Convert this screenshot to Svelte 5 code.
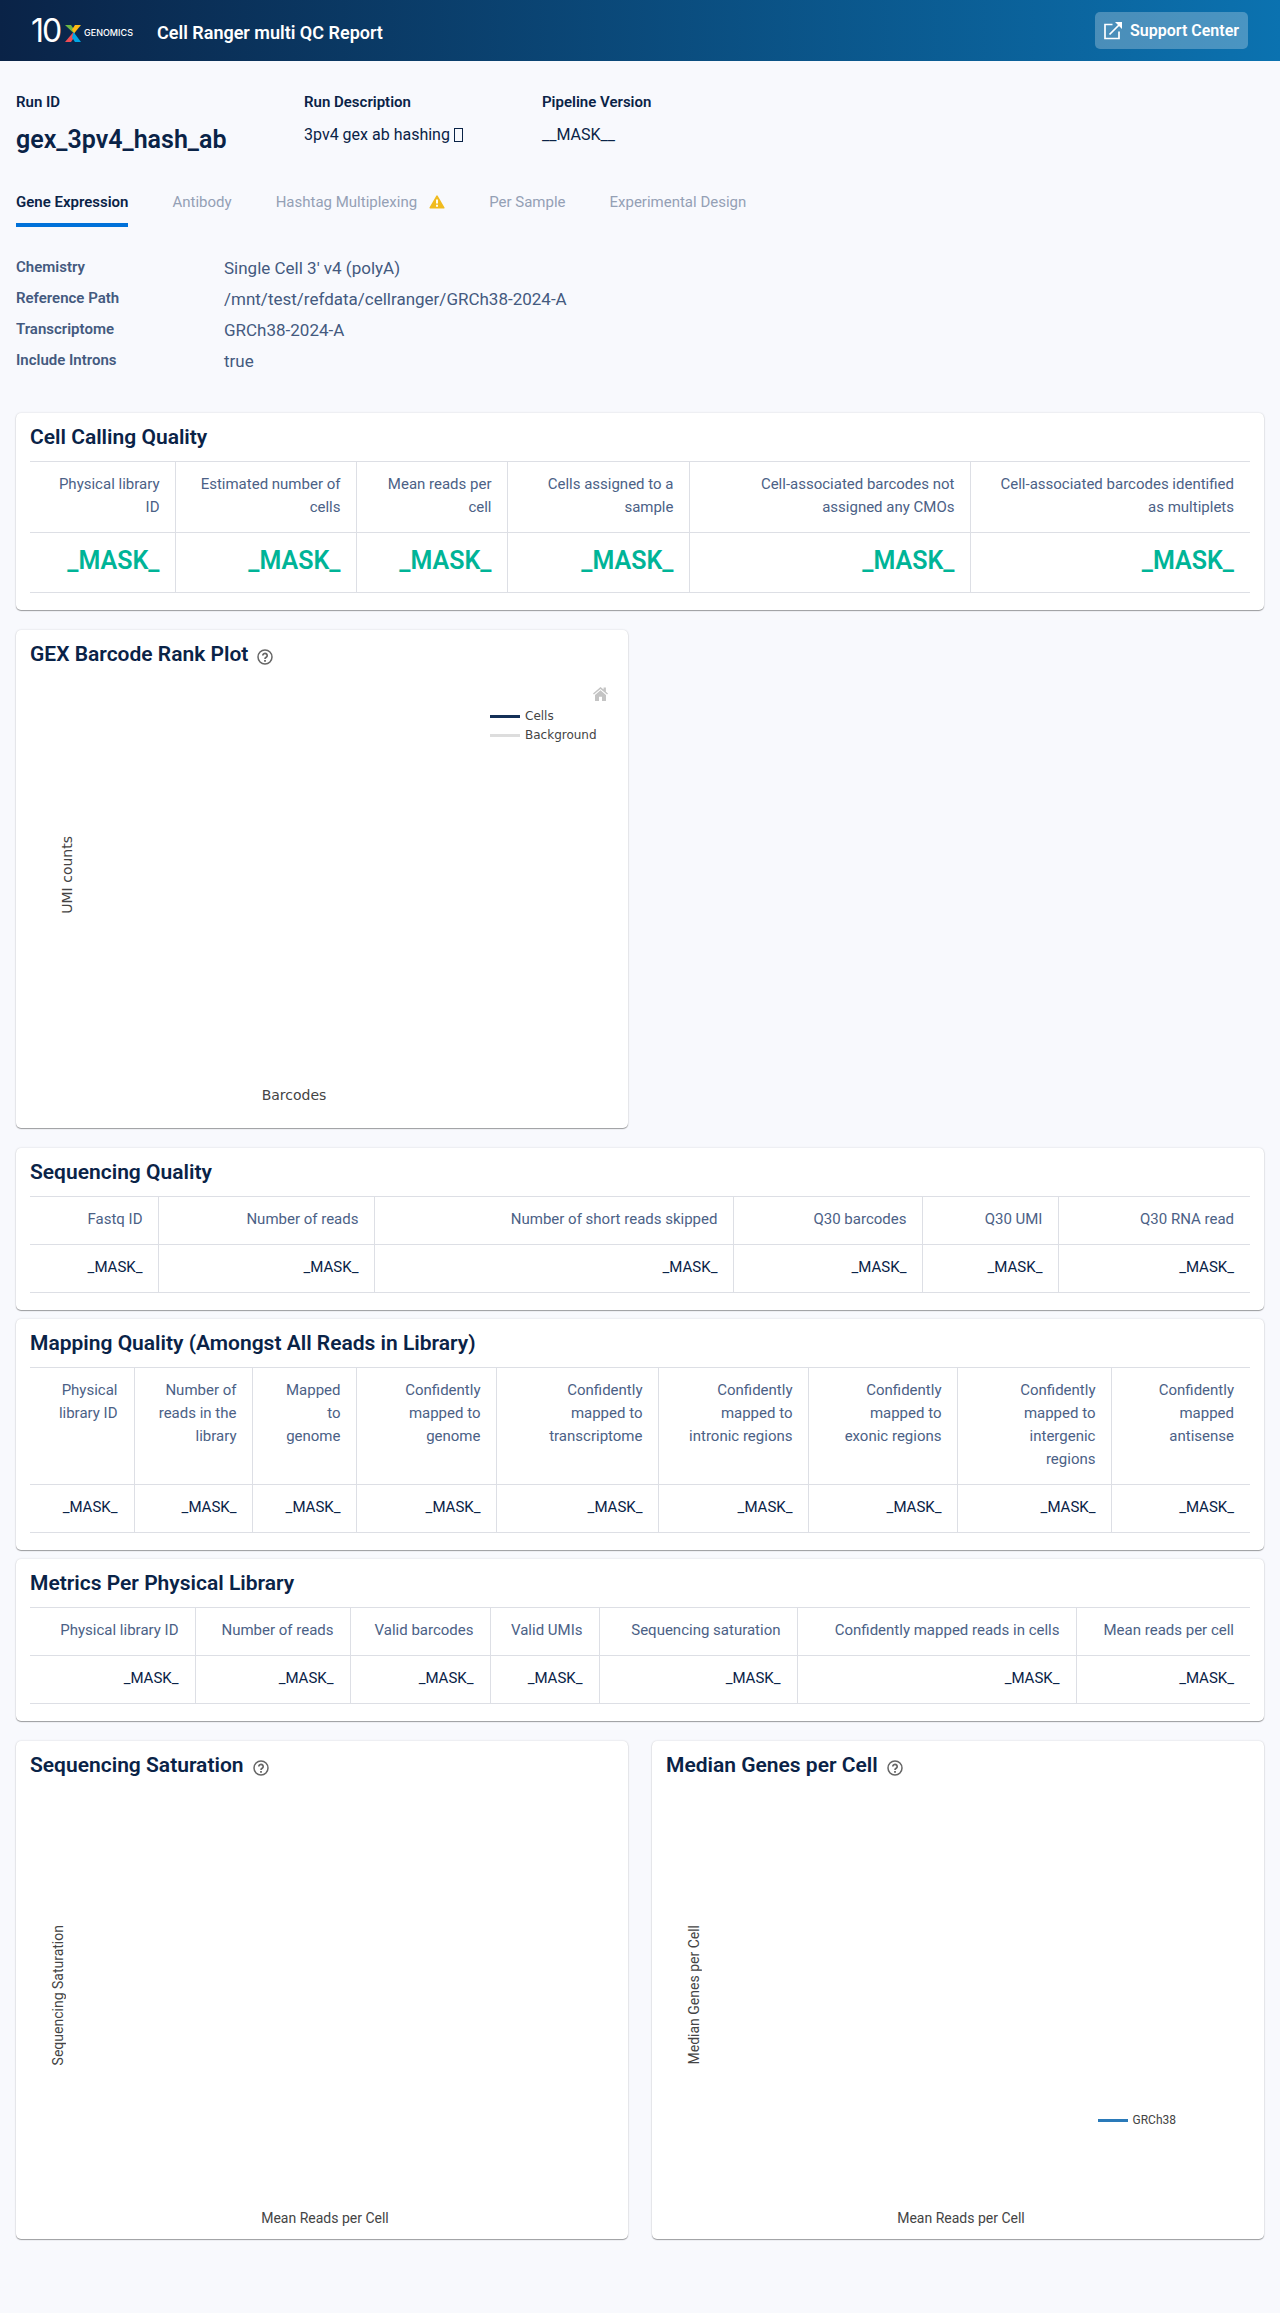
<script>
  const mask = '_MASK_';

  const tabs = [
    { label: 'Gene Expression', active: true },
    { label: 'Antibody' },
    { label: 'Hashtag Multiplexing', warning: true },
    { label: 'Per Sample' },
    { label: 'Experimental Design' }
  ];

  const details = [
    ['Chemistry', "Single Cell 3' v4 (polyA)"],
    ['Reference Path', '/mnt/test/refdata/cellranger/GRCh38-2024-A'],
    ['Transcriptome', 'GRCh38-2024-A'],
    ['Include Introns', 'true']
  ];

  // Each column is [heading, relative width].
  const cellCalling = {
    title: 'Cell Calling Quality',
    hero: true,
    columns: [
      ['Physical library\nID', 146],
      ['Estimated number of\ncells', 181],
      ['Mean reads per\ncell', 151],
      ['Cells assigned to a\nsample', 182],
      ['Cell-associated barcodes not\nassigned any CMOs', 281],
      ['Cell-associated barcodes identified\nas multiplets', 279]
    ]
  };

  const metricTables = [
    {
      title: 'Sequencing Quality',
      columns: [
        ['Fastq ID', 129],
        ['Number of reads', 216],
        ['Number of short reads skipped', 359],
        ['Q30 barcodes', 189],
        ['Q30 UMI', 136],
        ['Q30 RNA read', 191]
      ]
    },
    {
      title: 'Mapping Quality (Amongst All Reads in Library)',
      columns: [
        ['Physical\nlibrary ID', 104],
        ['Number of\nreads in the\nlibrary', 119],
        ['Mapped\nto\ngenome', 104],
        ['Confidently\nmapped to\ngenome', 140],
        ['Confidently\nmapped to\ntranscriptome', 162],
        ['Confidently\nmapped to\nintronic regions', 150],
        ['Confidently\nmapped to\nexonic regions', 149],
        ['Confidently\nmapped to\nintergenic\nregions', 154],
        ['Confidently\nmapped\nantisense', 138]
      ]
    },
    {
      title: 'Metrics Per Physical Library',
      columns: [
        ['Physical library ID', 165],
        ['Number of reads', 155],
        ['Valid barcodes', 140],
        ['Valid UMIs', 109],
        ['Sequencing saturation', 198],
        ['Confidently mapped reads in cells', 279],
        ['Mean reads per cell', 174]
      ]
    }
  ];

  const share = (columns, width) =>
    (100 * width) / columns.reduce((sum, column) => sum + column[1], 0);
</script>

{#snippet metricCard(data)}
  <section class="card">
    <h2>{data.title}</h2>
    <div class="scroll">
      <table class:hero={data.hero}>
        <colgroup>
          {#each data.columns as [, width]}
            <col style:width="{share(data.columns, width)}%" />
          {/each}
        </colgroup>
        <thead>
          <tr>
            {#each data.columns as [label]}<th scope="col">{label}</th>{/each}
          </tr>
        </thead>
        <tbody>
          <tr>
            {#each data.columns as _}<td>{mask}</td>{/each}
          </tr>
        </tbody>
      </table>
    </div>
  </section>
{/snippet}

{#snippet plotTitle(title)}
  <div class="plot-title">
    <h2>{title}</h2>
    <button class="help" type="button" aria-label="About {title}">
      <svg viewBox="0 0 16 16" width="16" height="16" fill="none" stroke="#666" aria-hidden="true">
        <circle cx="8" cy="8" r="7" stroke-width="1.5" />
        <path d="M5.8 6.5a2.2 2.1 0 1 1 3.5 1.7C8.4 8.8 8 9 8 9.9" stroke-width="1.7" />
        <path d="M8 11v1.7" stroke-width="1.8" />
      </svg>
    </button>
  </div>
{/snippet}

<header class="topbar">
  <svg class="logo" viewBox="-2 0 106 40" width="106" height="40" role="img" aria-label="10x Genomics">
    <text x="-1" y="31" class="logo-ten">1</text>
    <text x="10" y="31" class="logo-ten">0</text>
    <path d="M33 14h6l3.500 5v4z" fill="#6cb644" />
    <path d="M49 14h-6l-3 4.500 2 4z" fill="#fdb913" />
    <path d="M33 31h6l3.500-5-1-5z" fill="#ef4c54" />
    <path d="M49 31h-6l-3-4.500 1.500-5.500z" fill="#00a5e3" />
    <text x="52" y="25" class="logo-name">GENOMICS</text>
  </svg>
  <h1>Cell Ranger multi QC Report</h1>
  <a class="support" href="#support">
    <svg viewBox="0 0 18 18" width="18" height="18" fill="none" stroke="#fff" stroke-width="1.7" aria-hidden="true">
      <path d="M8.500 2.500H1v14h14V9.500M5.500 12.500L16 2" />
      <path d="M11 0h7v7z" fill="#fff" stroke="none" />
    </svg>
    Support Center
  </a>
</header>

<main>
  <dl class="run">
    <div class="run-id">
      <dt>Run ID</dt>
      <dd>gex_3pv4_hash_ab</dd>
    </div>
    <div>
      <dt>Run Description</dt>
      <dd>3pv4 gex ab hashing <span class="glyph"></span></dd>
    </div>
    <div>
      <dt>Pipeline Version</dt>
      <dd>__MASK__</dd>
    </div>
  </dl>

  <nav>
    {#each tabs as tab}
      <button type="button" class:active={tab.active}>
        {tab.label}
        {#if tab.warning}
          <svg viewBox="0 0 16 14" width="16" height="14" aria-hidden="true">
            <path d="M8 1.200L14.800 12.800H1.200z" fill="#f0bb1f" stroke="#f0bb1f" stroke-width="1.6" stroke-linejoin="round" />
            <path d="M8 4.500v4M8 9.800v1.900" stroke="#fff" stroke-width="1.9" />
          </svg>
        {/if}
      </button>
    {/each}
  </nav>

  <dl class="details">
    {#each details as [name, value]}
      <dt>{name}</dt>
      <dd>{value}</dd>
    {/each}
  </dl>

  {@render metricCard(cellCalling)}

  <div class="plots">
    <section class="card">
      {@render plotTitle('GEX Barcode Rank Plot')}
      <div class="plot rank">
        <span class="y-label">UMI counts</span>
        <div class="side">
          <button class="home" type="button" aria-label="Reset axes">
            <svg viewBox="0 0 15 14" width="15" height="14" fill="#c4c4c4" aria-hidden="true">
              <path d="M7.500 3.200L2 7.900V13.400q0 .6.600.6H6V9.800h3V14h3.400q.6 0 .6-.6V7.900z" />
              <path d="M7.500 0L0 6.500l.9 1.100L7.500 2l6.600 5.600.9-1.100-2.100-1.800V.6H10.600v2z" />
            </svg>
          </button>
          <ul class="legend">
            <li><i class="line cells"></i>Cells</li>
            <li><i class="line background"></i>Background</li>
          </ul>
        </div>
        <span class="x-label">Barcodes</span>
      </div>
    </section>
  </div>

  <div class="stack">
    {#each metricTables as data}
      {@render metricCard(data)}
    {/each}
  </div>

  <div class="plots">
    <section class="card">
      {@render plotTitle('Sequencing Saturation')}
      <div class="plot">
        <span class="y-label">Sequencing Saturation</span>
        <span class="x-label">Mean Reads per Cell</span>
      </div>
    </section>
    <section class="card">
      {@render plotTitle('Median Genes per Cell')}
      <div class="plot">
        <span class="y-label">Median Genes per Cell</span>
        <ul class="legend inner">
          <li><i class="line genome"></i>GRCh38</li>
        </ul>
        <span class="x-label">Mean Reads per Cell</span>
      </div>
    </section>
  </div>
</main>

<style>
  :global(body) {
    background: #f8f9fd;
    color: #0a2347;
    font: 15px/23px Roboto, 'Liberation Sans', sans-serif;
  }

  h1, h2, dl, dd, ul {
    margin: 0;
    padding: 0;
  }

  button {
    padding: 0;
    border: 0;
    background: none;
    font: inherit;
    cursor: pointer;
  }

  .topbar {
    display: flex;
    align-items: center;
    height: 61px;
    padding: 0 32px 0 30px;
    background: linear-gradient(90deg, #0a2347, #0b72b0);
    color: #fff;
  }

  .logo {
    flex: none;
    margin-right: 21px;
    fill: #fff;
    font-family: Inter, 'Liberation Sans', sans-serif;
  }

  .logo-ten {
    font-size: 32px;
    font-weight: 400;
  }

  .logo-name {
    font-size: 9px;
    font-weight: 500;
  }

  h1 {
    padding-top: 3px;
    font-size: 18px;
    font-weight: 600;
  }

  .support {
    display: flex;
    align-items: center;
    gap: 8px;
    height: 37px;
    margin-left: auto;
    padding: 0 9px;
    border-radius: 5px;
    background: rgba(255, 255, 255, 0.26);
    color: #fff;
    font-size: 16px;
    font-weight: 600;
    text-decoration: none;
  }

  main {
    padding: 30px 16px 53px;
  }

  .run {
    display: grid;
    grid-template-columns: 288px 238px 1fr;
  }

  .run dt {
    font-weight: 600;
  }

  .run dd {
    margin-top: 8px;
    font-size: 16px;
    line-height: 26px;
  }

  .run .run-id dd {
    font-size: 25px;
    font-weight: 600;
    line-height: 36px;
  }

  .glyph {
    display: inline-block;
    box-sizing: border-box;
    width: 9px;
    height: 14px;
    border: 1px solid #0a2347;
    vertical-align: -2px;
  }

  nav {
    display: flex;
    flex-wrap: wrap;
    gap: 0 44px;
    margin-top: 24px;
  }

  nav button {
    display: flex;
    align-items: center;
    gap: 12px;
    height: 45px;
    padding: 8px 0 9px;
    border-bottom: 4px solid transparent;
    color: #94a0b5;
  }

  nav .active {
    border-color: #0071d9;
    color: #0a2347;
    font-weight: 600;
  }

  .details {
    display: grid;
    grid-template-columns: 208px 1fr;
    margin-top: 25px;
    padding-bottom: 37px;
    color: #445a7f;
    line-height: 31px;
  }

  .details dt {
    font-weight: 600;
  }

  .details dd {
    padding-top: 2px;
    font-size: 17px;
    line-height: 29px;
  }

  .card {
    min-width: 0;
    padding: 0 14px;
    border-radius: 5px;
    background: #fff;
    box-shadow: 0 1px 1px rgba(0, 0, 0, 0.35), 0 0 2px rgba(0, 0, 0, 0.16);
  }

  h2 {
    font-size: 21px;
    font-weight: 600;
    line-height: 48px;
  }

  .scroll {
    overflow-x: auto;
    padding-bottom: 17px;
  }

  table {
    width: 100%;
    border-collapse: collapse;
    table-layout: fixed;
  }

  th, td {
    padding: 11px 16px 13px 4px;
    border: solid #dddfe5;
    border-width: 1px 0 1px 1px;
    text-align: right;
    vertical-align: top;
  }

  th:first-child, td:first-child {
    border-left: 0;
  }

  th {
    color: #4b6186;
    font-weight: 400;
    white-space: pre-line;
  }

  .hero td {
    padding-top: 10px;
    padding-bottom: 13px;
    color: #00b497;
    font-size: 25px;
    font-weight: 600;
    line-height: 36px;
  }

  .plots {
    display: grid;
    grid-template-columns: repeat(2, minmax(0, 1fr));
    gap: 24px;
    margin: 20px 0;
  }

  .stack {
    display: grid;
    gap: 9px;
  }

  .plot-title {
    display: flex;
    align-items: center;
    gap: 9px;
  }

  .help {
    height: 16px;
    margin-top: 6px;
    line-height: 0;
  }

  .plot {
    display: grid;
    grid-template: minmax(412px, 1fr) 34px / 84px minmax(0, 1fr) 78px;
    margin: 0 -14px;
    padding-bottom: 4px;
    color: #444;
    font-size: 14px;
  }

  .rank {
    grid-template: minmax(394px, 1fr) 46px / 82px minmax(0, 1fr) 138px;
    padding-bottom: 10px;
    font-family: 'DejaVu Sans', sans-serif;
  }

  .y-label {
    grid-area: 1 / 1;
    place-self: center;
    writing-mode: vertical-rl;
    transform: rotate(180deg);
  }

  .rank .y-label {
    margin-left: 20px;
  }

  .x-label {
    grid-area: 2 / 2;
    place-self: center;
  }

  .side {
    grid-area: 1 / 3;
    display: flex;
    flex-direction: column;
  }

  .home {
    align-self: flex-end;
    height: 14px;
    margin: 9px 20px 6px 0;
    line-height: 0;
  }

  .legend {
    list-style: none;
    font-size: 12px;
    line-height: 19px;
  }

  .legend li {
    display: flex;
    align-items: center;
    gap: 5px;
  }

  .inner {
    grid-area: 1 / 2;
    place-self: end;
    margin: 0 10px 71px 0;
  }

  .line {
    width: 30px;
    height: 3px;
  }

  .cells {
    background: #143057;
  }

  .background {
    background: #ddd;
  }

  .genome {
    background: #2a7ab9;
  }
</style>
